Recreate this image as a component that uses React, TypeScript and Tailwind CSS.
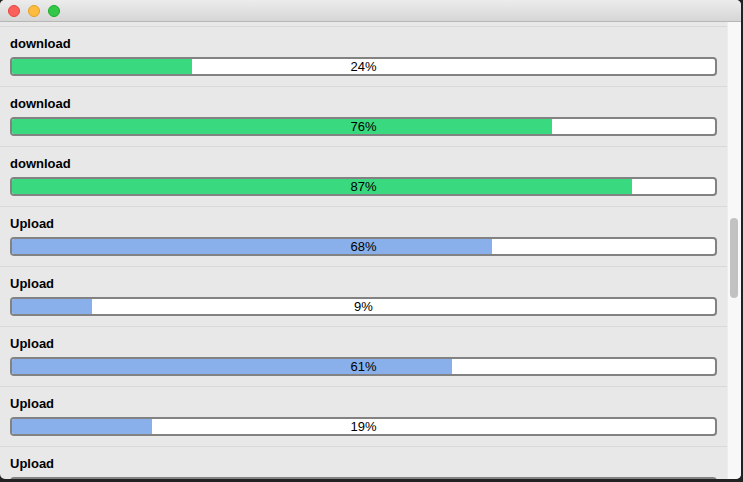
import React from "react";

type Transfer = {
  label: string;
  percent?: number;
  fill: number; // px of the inner track that is filled
  kind: "down" | "up";
};

const transfers: Transfer[] = [
  { label: "download", percent: 24, fill: 180, kind: "down" },
  { label: "download", percent: 76, fill: 540, kind: "down" },
  { label: "download", percent: 87, fill: 620, kind: "down" },
  { label: "Upload", percent: 68, fill: 480, kind: "up" },
  { label: "Upload", percent: 9, fill: 80, kind: "up" },
  { label: "Upload", percent: 61, fill: 440, kind: "up" },
  { label: "Upload", percent: 19, fill: 140, kind: "up" },
  // last row is cut by the window edge, its percent is not visible
  { label: "Upload", fill: 300, kind: "up" },
];

function ProgressRow({ item }: { item: Transfer }) {
  return (
    <div className="h-[60px] shrink-0 border-b border-[#d9d9d9] px-[10px] pt-[9px]">
      <div className="text-[13px] leading-4 font-bold text-black">{item.label}</div>
      <div className="relative mt-[5px] h-[19px] overflow-hidden rounded-[4px] border-2 border-[#828282] bg-white">
        <div
          className={`h-full ${item.kind === "down" ? "bg-[#39d97f]" : "bg-[#89b0ea]"}`}
          style={{ width: item.fill }}
        />
        {item.percent !== undefined && (
          <div className="absolute inset-0 flex items-center justify-center text-[13px] leading-none text-black">
            {item.percent}%
          </div>
        )}
      </div>
    </div>
  );
}

export default function App() {
  return (
    <div
      className="h-[482px] w-[743px] overflow-hidden bg-[#222222]"
      style={{ fontFamily: '"Liberation Sans", Arial, sans-serif' }}
    >
      <div className="flex h-[479px] w-[741px] flex-col overflow-hidden rounded-[5px] bg-[#e8e8e8]">
        {/* title bar */}
        <div className="flex h-[22px] shrink-0 items-center gap-2 border-b border-[#b6b6b6] bg-linear-to-b from-[#ececec] to-[#d6d6d6] pl-2">
          <span className="h-3 w-3 rounded-full border border-[#e2463f] bg-[#fc605c]" />
          <span className="h-3 w-3 rounded-full border border-[#dfa023] bg-[#fdbc40]" />
          <span className="h-3 w-3 rounded-full border border-[#1aab29] bg-[#34c84a]" />
        </div>

        <div className="flex min-h-0 flex-1">
          {/* list */}
          <div className="flex min-w-0 flex-1 flex-col overflow-hidden">
            <div className="h-[5px] shrink-0 border-b border-[#d9d9d9]" />
            {transfers.map((t, i) => (
              <ProgressRow key={i} item={t} />
            ))}
          </div>

          {/* scrollbar */}
          <div className="relative w-[14px] shrink-0 border-l border-[#ededed] bg-[#f8f8f8]">
            <div className="absolute left-[2px] top-[196px] h-[80px] w-[8px] rounded-full bg-[#c2c2c2]" />
          </div>
        </div>
      </div>
    </div>
  );
}
